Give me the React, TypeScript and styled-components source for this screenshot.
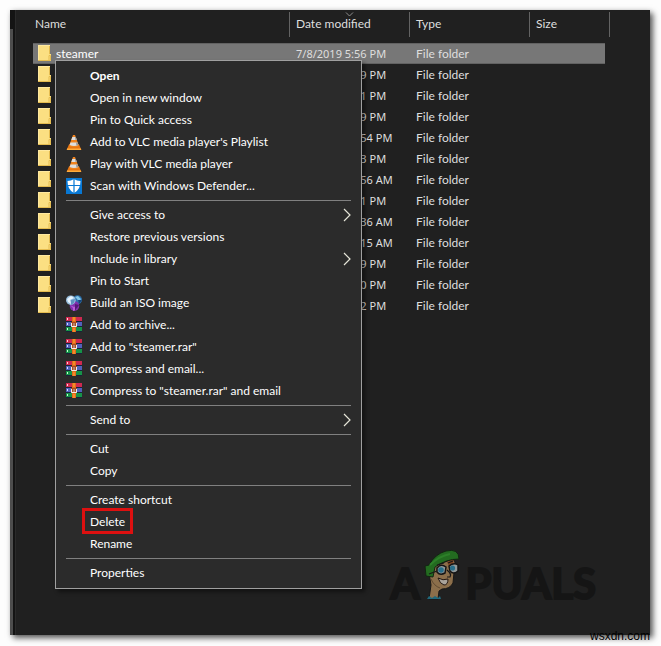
import React from "react";
import styled, { createGlobalStyle, css } from "styled-components";

const GlobalStyle = createGlobalStyle`
  *, *::after { box-sizing: border-box; }
  body {
    margin: 0;
    background: #fdfdfd;
    font-family: Lato, "Open Sans", sans-serif;
    font-size: 12px;
    color: #dedede;
  }
`;

const Page = styled.div`
  position: relative;
  display: flex;
  min-height: 100vh;
  padding: 10px 11px 11px 10px;
`;

const ExplorerWindow = styled.main`
  position: relative;
  flex: 1;
  display: flex;
  min-width: 0;
  background: #202020;
  box-shadow: 3px 3px 6px rgba(0, 0, 0, 0.65), 0 0 5px rgba(0, 0, 0, 0.08);
`;

const ScrollEdge = styled.div`
  width: 6px;
  padding-top: 19px;
  background: #141414;
  border-right: 1px solid #2a2a2a;
  display: flex;
`;

const ScrollThumb = styled.div`
  width: 3px;
  background: #4d4d4d;
`;

const FileArea = styled.section`
  flex: 1;
  min-width: 0;
  padding: 2px 0 0 17px;
`;

const FileTable = styled.table`
  width: 577px;
  table-layout: fixed;
  border-collapse: separate;
  border-spacing: 0;
`;

const Column = styled.col<{ $width?: number }>`
  ${(p) => p.$width && `width: ${p.$width}px;`}
`;

const HeaderCell = styled.th<{ $first?: boolean }>`
  position: relative;
  height: 25px;
  padding: 0 0 2px ${(p) => (p.$first ? 2 : 6)}px;
  border-right: 1px solid #636363;
  font-weight: 400;
  text-align: left;
`;

const SortMark = styled.svg`
  position: absolute;
  top: 0;
  left: 55px;
`;

const HeaderGap = styled.tr`
  height: 6px;
`;

const Cell = styled.td<{ $selected?: boolean }>`
  height: 21px;
  padding: 0 0 0 6px;
  line-height: 19px;
  white-space: nowrap;
  ${(p) =>
    p.$selected &&
    css`
      background: #777777;
      border-top: 1px solid #626262;
      border-bottom: 1px solid #626262;
    `}
`;

const NameCell = styled(Cell)`
  padding-left: 5px;
`;

const DateCell = styled(Cell)`
  font-family: "Noto Sans", sans-serif;
  font-size: 11px;
`;

const FileName = styled.span`
  display: flex;
  align-items: center;
  gap: 4px;
  height: 19px;
  color: #ffffff;
`;

const Menu = styled.div`
  position: absolute;
  top: 50px;
  left: 45px;
  width: 307px;
  padding: 4px 0;
  display: flex;
  flex-direction: column;
  background: #2b2b2b;
  border: 1px solid #a0a0a0;
  box-shadow: 3px 3px 4px rgba(0, 0, 0, 0.45);
`;

const MenuButton = styled.button<{ $bold?: boolean; $marked?: boolean }>`
  position: relative;
  display: flex;
  align-items: center;
  gap: 8px;
  height: 22px;
  padding: 0 10px;
  border: 0;
  background: transparent;
  color: #ffffff;
  font: inherit;
  font-weight: ${(p) => (p.$bold ? 700 : 400)};
  text-align: left;
  white-space: nowrap;

  &:hover { background: #414141; }

  ${(p) =>
    p.$marked &&
    css`
      &::after {
        content: "";
        position: absolute;
        top: -3px;
        left: 26px;
        width: 51px;
        height: 26px;
        border: 3px solid #dd1010;
      }
    `}
`;

const IconSlot = styled.span`
  display: flex;
  width: 16px;
  height: 16px;
  flex: none;
`;

const Label = styled.span`
  flex: 1;
  padding-bottom: 2px;
`;

const Divider = styled.hr`
  width: auto;
  height: 1px;
  margin: 3px 10px;
  border: 0;
  background: #808080;
`;

const Watermark = styled.div`
  position: absolute;
  right: 54px;
  bottom: 31px;
  display: flex;
  align-items: flex-end;
  color: #151515;
  font: 700 42px/42px Lato, sans-serif;
  -webkit-text-stroke: 2px #151515;
`;

const Mascot = styled.svg`
  margin: 0 4px 4px;
`;

const Credit = styled.span`
  position: absolute;
  right: 11px;
  bottom: 3px;
  color: #000000;
  font: 12px/14px "Liberation Sans", sans-serif;
`;

function FolderIcon() {
  return (
    <svg width="14" height="17" viewBox="0 0 14 17" aria-hidden="true">
      <path d="M0 0h12v9h1v7H0z" fill="#fbdf82" />
      <path d="M0 0h12v1H1v15H0z" fill="#ffe9a0" />
      <path d="M11.500 1v8M11 15.500V10.500h1.500v5H0" fill="none" stroke="#e5bc50" />
    </svg>
  );
}

function ConeIcon() {
  return (
    <svg width="16" height="16" viewBox="0 0 16 16" aria-hidden="true">
      <path d="M3 10.500h10l2.500 5.500H.5z" fill="#e87511" />
      <path d="M1 14.500h14V16H1z" fill="#ffad3d" />
      <path d="M7 1h2l4 11q-5 2.500-10 0z" fill="#ef821d" />
      <path d="M6.300 3h3.400l1 3H5.300zM4.500 8.500h7l.9 2.400q-4.400 2-8.800 0z" fill="#dedede" />
      <path d="M9 3h.8l1 3H9.500zM10 8.500h1.500l.9 2.400-2 .7z" fill="#999" />
    </svg>
  );
}

function DefenderIcon() {
  return (
    <svg width="16" height="16" viewBox="0 0 16 16" aria-hidden="true">
      <path d="M0 0h16v16H0z" fill="#0878d4" />
      <path d="M8 1q2.800 2 6.500 2 0 8.900-6.500 12-6.500-3.100-6.500-12Q5.200 3 8 1z" fill="#fff" />
      <path d="M8 1v14M1 7.500h14" stroke="#0878d4" strokeWidth="1.200" />
    </svg>
  );
}

function IsoIcon() {
  return (
    <svg width="16" height="16" viewBox="0 0 16 16" aria-hidden="true">
      <circle cx="11.500" cy="4.800" r="4.500" fill="#2d71ad" />
      <path d="M9 2l3-1 3 3-2 3-2-3z" fill="#83c8e9" />
      <path d="M12 5l4 0-3 4z" fill="#174477" />
      <circle cx="8.500" cy="11" r="4.800" fill="#8130ae" />
      <path d="M4 10l4 2 4-2-2 5-3 1 0-3z" fill="#b95bd9" />
      <path d="M9 9l4 1-4 6z" fill="#541778" />
      <circle cx="4.800" cy="5.200" r="4.800" fill="#9ac0de" />
      <path d="M1 4l4-3 3 2-4 2 1 4-3-2z" fill="#e6f4ff" />
      <path d="M5 5l4-1-1 4-3 2z" fill="#5e91c2" />
    </svg>
  );
}

function ArchiveIcon() {
  return (
    <svg width="16" height="16" viewBox="0 0 16 16" aria-hidden="true">
      <path d="M0 0h16v5H0z" fill="#cf2950" />
      <path d="M0 5h16v5H0z" fill="#5261bb" />
      <path d="M0 10h16v5H0z" fill="#169348" />
      <path d="M0 4.500h16M0 9.500h16M0 14.500h16" stroke="#17243a" />
      <path d="M1.500 1v2" stroke="#ffd1d8" />
      <path d="M1.500 6v2" stroke="#d7dcff" />
      <path d="M1.500 11v2" stroke="#c6ffd0" />
      <path d="M6 0h4v15H6z" fill="#e36a18" />
      <path d="M7 0h2v4H7zM7 11h2v4H7z" fill="#f28a2c" />
      <path d="M5 5h6v5H5z" fill="#a94c22" />
      <path d="M5.500 6v3.500h5V6" fill="none" stroke="#f2eeee" />
      <path d="M8 6v3" stroke="#c9b6ad" />
    </svg>
  );
}

function SubmenuArrow() {
  return (
    <svg width="8" height="14" viewBox="0 0 8 14" aria-hidden="true">
      <path d="M1 1l6 6-6 6" fill="none" stroke="#e5e5d8" strokeWidth="1.200" />
    </svg>
  );
}

function MascotDrawing() {
  return (
    <Mascot width="38" height="51" viewBox="0 0 38 51" aria-hidden="true">
      <path d="M5 24L10 17 29 10l2 3-2 21q-3 6-11 6l-3 2-1 8H5l2-14z" fill="#8c6f4b" stroke="#171717" />
      <path d="M23 13l6-3 1 8-5-1z" fill="#824522" />
      <path d="M1 17l4-1Q11 5 22 2q13-3 13 8-13 0-24 8l-2 10-7-1z" fill="#236b20" stroke="#122412" />
      <path d="M6 16q9-9 20-11" fill="none" stroke="#2d8029" strokeWidth="2" />
      <path d="M13 19q4-5 9-1l-1 6q-5 3-8-1z" fill="#91999a" stroke="#151515" strokeWidth="1.500" />
      <path d="M25 17q5-4 9-1v6q-5 4-8 0z" fill="#91999a" stroke="#151515" strokeWidth="1.500" />
      <circle cx="17" cy="21" r="2.800" fill="#286f8b" />
      <circle cx="28.500" cy="19" r="2.600" fill="#286f8b" />
      <path d="M5 25l8-3M13 16l7-2M24 14l5-2M23 21q5 4 3 7l-3 0" fill="none" stroke="#191919" strokeWidth="1.200" />
      <path d="M14 29q5 3 10 1 0 6-4 6-4-1-6-7z" fill="#aaa49b" stroke="#241711" />
      <path d="M7 30q3 7 9 9" fill="none" stroke="#604a31" />
      <path d="M3 50l2-3 3 2 3-2 3 2 2-2 1 3z" fill="#20697d" />
    </Mascot>
  );
}

type Entry =
  | "divider"
  | { label: string; icon?: React.ReactNode; bold?: boolean; submenu?: boolean; marked?: boolean };

const entries: Entry[] = [
  { label: "Open", bold: true },
  { label: "Open in new window" },
  { label: "Pin to Quick access" },
  { label: "Add to VLC media player's Playlist", icon: <ConeIcon /> },
  { label: "Play with VLC media player", icon: <ConeIcon /> },
  { label: "Scan with Windows Defender...", icon: <DefenderIcon /> },
  "divider",
  { label: "Give access to", submenu: true },
  { label: "Restore previous versions" },
  { label: "Include in library", submenu: true },
  { label: "Pin to Start" },
  { label: "Build an ISO image", icon: <IsoIcon /> },
  { label: "Add to archive...", icon: <ArchiveIcon /> },
  { label: 'Add to "steamer.rar"', icon: <ArchiveIcon /> },
  { label: "Compress and email...", icon: <ArchiveIcon /> },
  { label: 'Compress to "steamer.rar" and email', icon: <ArchiveIcon /> },
  "divider",
  { label: "Send to", submenu: true },
  "divider",
  { label: "Cut" },
  { label: "Copy" },
  "divider",
  { label: "Create shortcut" },
  { label: "Delete", marked: true },
  { label: "Rename" },
  "divider",
  { label: "Properties" },
];

const files = [
  { name: "steamer", date: "7/8/2019 5:56 PM" },
  { date: "7/8/2019 5:49 PM" },
  { date: "7/8/2019 5:41 PM" },
  { date: "7/8/2019 5:39 PM" },
  { date: "7/8/2019 12:54 PM" },
  { date: "7/7/2019 5:33 PM" },
  { date: "7/7/2019 10:56 AM" },
  { date: "7/6/2019 5:21 PM" },
  { date: "7/6/2019 10:36 AM" },
  { date: "7/5/2019 10:15 AM" },
  { date: "7/4/2019 5:19 PM" },
  { date: "7/3/2019 5:10 PM" },
  { date: "7/2/2019 5:12 PM" },
];

export default function App() {
  return (
    <Page>
      <GlobalStyle />
      <ExplorerWindow>
        <ScrollEdge>
          <ScrollThumb />
        </ScrollEdge>
        <FileArea>
          <FileTable>
            <colgroup>
              <Column $width={257} />
              <Column $width={120} />
              <Column $width={120} />
              <Column />
              <Column $width={5} />
            </colgroup>
            <thead>
              <tr>
                <HeaderCell $first>Name</HeaderCell>
                <HeaderCell>
                  <SortMark width="9" height="5" viewBox="0 0 9 5" aria-hidden="true">
                    <path d="M1 .5l3.500 3.500L8 .5" fill="none" stroke="#8c8c8c" />
                  </SortMark>
                  Date modified
                </HeaderCell>
                <HeaderCell>Type</HeaderCell>
                <HeaderCell colSpan={2}>Size</HeaderCell>
              </tr>
              <HeaderGap />
            </thead>
            <tbody>
              {files.map((file, i) => (
                <tr key={i}>
                  <NameCell $selected={i === 0}>
                    <FileName>
                      <FolderIcon />
                      {file.name}
                    </FileName>
                  </NameCell>
                  <DateCell $selected={i === 0}>{file.date}</DateCell>
                  <Cell $selected={i === 0}>File folder</Cell>
                  <Cell $selected={i === 0} />
                </tr>
              ))}
            </tbody>
          </FileTable>
        </FileArea>
        <Watermark>
          <span>A</span>
          <MascotDrawing />
          <span>PUALS</span>
        </Watermark>
        <Menu role="menu" aria-label="Folder actions">
          {entries.map((entry, i) =>
            entry === "divider" ? (
              <Divider key={i} />
            ) : (
              <MenuButton key={i} type="button" role="menuitem" $bold={entry.bold} $marked={entry.marked}>
                <IconSlot>{entry.icon}</IconSlot>
                <Label>{entry.label}</Label>
                {entry.submenu && <SubmenuArrow />}
              </MenuButton>
            )
          )}
        </Menu>
      </ExplorerWindow>
      <Credit>wsxdn.com</Credit>
    </Page>
  );
}
